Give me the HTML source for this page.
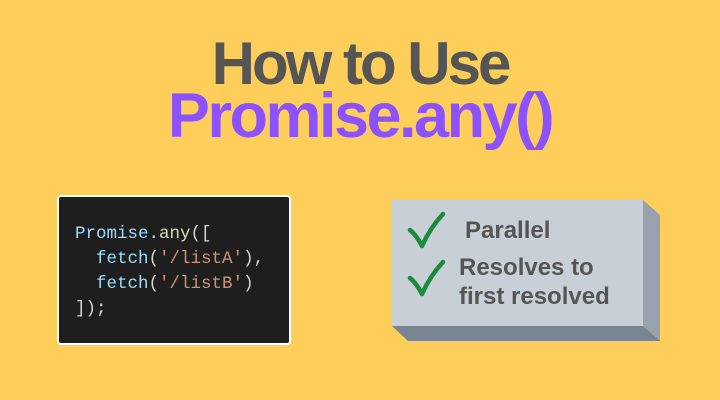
<!DOCTYPE html>
<html><head><style>
body{margin:0;width:720px;height:400px;background:#FECE5A;position:relative;overflow:hidden;font-family:"Liberation Sans",sans-serif}
.t{position:absolute;left:0;width:720px;text-align:center;font-weight:bold;letter-spacing:-2.5px}
.code{position:absolute;left:57px;top:195px;width:230px;height:146px;background:#1E1E1E;border:2px solid #fff;border-radius:4px}
.code pre{margin:0;position:absolute;left:16px;top:25px;font-family:"Liberation Mono",monospace;font-size:17.5px;line-height:25px;color:#d4d4d4}
.b{color:#9CDCFE}.y{color:#DCDCAA}.s{color:#CE9178}
.f{position:absolute;font-weight:bold;color:#555;font-size:24px;line-height:29px}
</style></head><body>
<div class="t" style="top:29px;font-size:60px;color:#555;letter-spacing:-3px">How to Use</div>
<div class="t" style="top:80px;font-size:63px;color:#8C52FF">Promise.any()</div>
<div class="code"><pre><span class="b">Promise</span>.<span class="y">any</span>([
  <span class="b">fetch</span>(<span class="s">'/listA'</span>),
  <span class="b">fetch</span>(<span class="s">'/listB'</span>)
]);</pre></div>
<svg style="position:absolute;left:0;top:0" width="720" height="400">
<polygon points="643,200 660,215 660,341 643,326" fill="#97A2AC"/>
<polygon points="392,326 643,326 660,341 408,341" fill="#788490"/>
<rect x="392" y="200" width="251" height="126" fill="#C8CFD7"/>
<path d="M410,230 Q417,236 422,246 Q430,228 443,214" stroke="#1B8A3A" stroke-width="4.5" fill="none" stroke-linecap="round" stroke-linejoin="round"/>
<path d="M410,278 Q417,284 422,294 Q430,276 443,262" stroke="#1B8A3A" stroke-width="4.5" fill="none" stroke-linecap="round" stroke-linejoin="round"/>
</svg>
<div class="f" style="left:465px;top:216px">Parallel</div>
<div class="f" style="left:459px;top:253px">Resolves to<br>first resolved</div>
</body></html>
